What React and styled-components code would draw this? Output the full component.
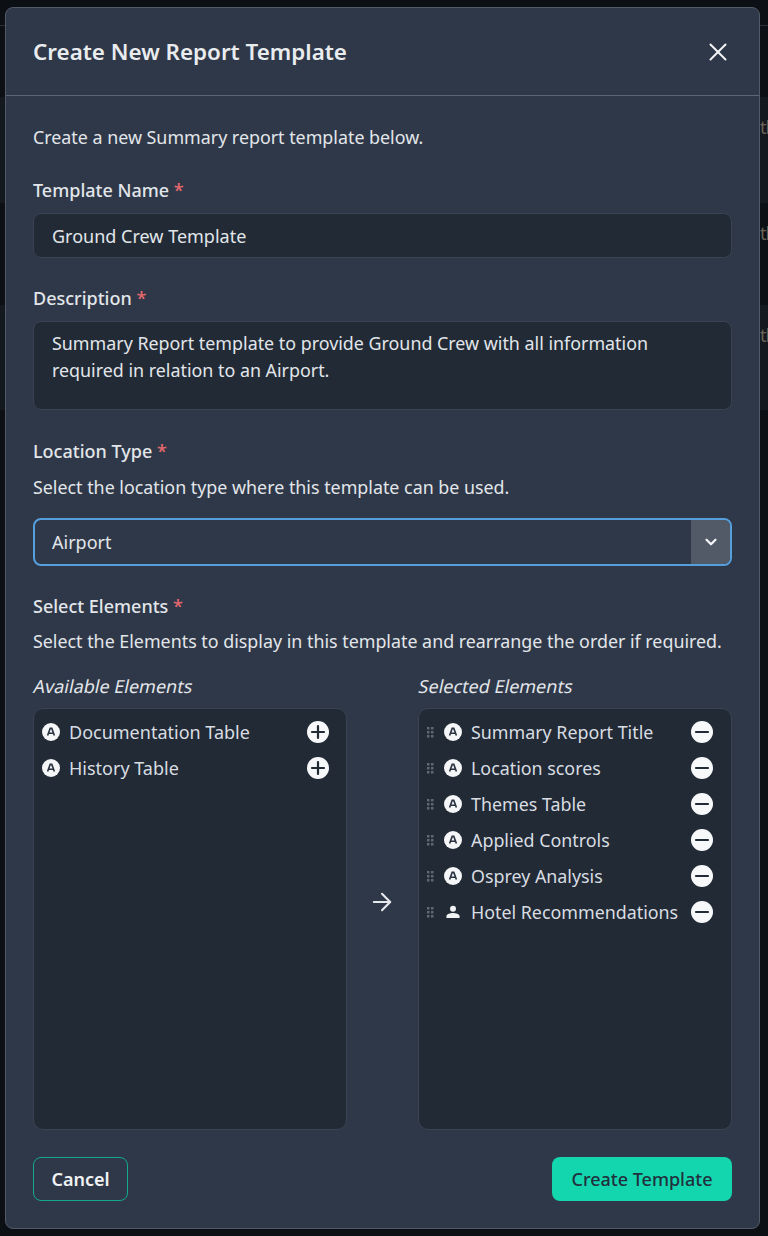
import React from "react";
import styled, { createGlobalStyle } from "styled-components";
import { ArrowRight, ChevronDown, X } from "lucide-react";

const GlobalStyle = createGlobalStyle`
  html, body {
    margin: 0;
    padding: 0;
    background: #0c1015;
  }
  * {
    box-sizing: border-box;
  }
`;

const Page = styled.div`
  position: relative;
  width: 768px;
  height: 1236px;
  overflow: hidden;
  padding: 7px 8px 0 5px;
  font-family: "Noto Sans", sans-serif;
  font-size: 18px;
  color: #e2e6ea;
`;

const BackdropRule = styled.div`
  position: absolute;
  top: 25px;
  left: 0;
  right: 0;
  height: 1px;
  background: #2b3038;
`;

const BackdropRow = styled.div`
  position: absolute;
  left: 0;
  right: 0;
  top: ${(p) => p.$top}px;
  height: ${(p) => p.$height}px;
  padding-left: 760px;
  background: ${(p) => (p.$shade ? "#141920" : "transparent")};
  color: #6b6455;
  font-size: 18px;
  letter-spacing: -1px;
  line-height: 60px;
  white-space: nowrap;
  overflow: hidden;
`;

const Modal = styled.div`
  position: relative;
  width: 755px;
  height: 1222px;
  background: #2f3848;
  border: 1px solid #525a68;
  border-radius: 8px;
`;

const Header = styled.div`
  display: flex;
  align-items: center;
  justify-content: space-between;
  height: 88px;
  padding: 0 27px;
  border-bottom: 1px solid #5d6573;
`;

const Title = styled.h2`
  margin: -1px 0 0;
  font-size: 22.4px;
  font-weight: 600;
  color: #e9ecef;
`;

const Close = styled.button`
  display: flex;
  margin-right: -1px;
  padding: 0;
  border: 0;
  background: none;
  color: #f2f4f6;
`;

const Body = styled.div`
  padding: 28px 27px 0;
`;

const Text = styled.p`
  margin: ${(p) => p.$top || 0}px 0 0;
  font-size: 17.85px;
  line-height: 27px;
  height: 27px;
`;

const Label = styled.div`
  margin-top: ${(p) => p.$top}px;
  font-weight: 500;
  line-height: 27px;
  height: 27px;
`;

const Star = styled.span`
  color: #e8696f;
`;

const Field = styled.div`
  margin-top: 9px;
  height: ${(p) => p.$height}px;
  padding: ${(p) => p.$pad}px 18px;
  background: #212a35;
  border: 1px solid #3a4352;
  border-radius: 8px;
  font-size: ${(p) => p.$size || 18}px;
  line-height: 27px;
`;

const Select = styled.div`
  display: flex;
  justify-content: space-between;
  margin-top: 17px;
  height: 48px;
  background: #2f3848;
  border: 2px solid #559fdc;
  border-radius: 8px;
  overflow: hidden;
`;

const SelectValue = styled.div`
  padding-left: 17px;
  line-height: 44px;
`;

const SelectButton = styled.div`
  display: flex;
  align-items: center;
  justify-content: center;
  width: 39px;
  background: #535a67;
  color: #f2f4f6;
`;

const Columns = styled.div`
  display: grid;
  grid-template-columns: 314px 71px 314px;
  margin-top: 18px;
`;

const Column = styled.div`
  min-width: 0;
`;

const ColumnTitle = styled.div`
  height: 27px;
  line-height: 27px;
  margin-bottom: 8px;
`;

const SlantedText = styled.span`
  display: inline-block;
  margin-left: 1px;
  transform: skewX(-12deg);
`;

const ListBox = styled.div`
  height: 422px;
  padding: 5px 0 0 8px;
  background: #212a35;
  border: 1px solid #3a4352;
  border-radius: 10px;
`;

const Row = styled.div`
  display: flex;
  align-items: center;
  height: 36px;
`;

const RowLabel = styled.span`
  flex: 1;
  margin-left: 9px;
  font-size: ${(p) => p.$size || 18}px;
  color: #d9dde2;
  white-space: nowrap;
`;

const ArrowCell = styled.div`
  display: flex;
  align-items: center;
  justify-content: center;
  padding: 1px 2px 0 0;
  color: #e6e9ec;
`;

const Footer = styled.div`
  display: flex;
  justify-content: space-between;
  margin-top: 27px;
`;

const CancelButton = styled.button`
  width: 95px;
  height: 44px;
  padding: 0;
  background: transparent;
  border: 1px solid #14a88e;
  border-radius: 8px;
  color: #f0f2f4;
  font: 600 18px "Noto Sans", sans-serif;
`;

const CreateButton = styled.button`
  width: 180px;
  height: 44px;
  padding: 0;
  background: #14d6ae;
  border: 0;
  border-radius: 8px;
  color: #21303d;
  font: 500 18px "Noto Sans", sans-serif;
`;

const BadgeSvg = styled.svg`
  flex: none;
  display: block;
`;

const AutoBadge = () => (
  <BadgeSvg width="18" height="18" viewBox="0 0 18 18">
    <circle cx="9" cy="9" r="9" fill="#f5f6f7" />
    <path d="M5.6 12.6 8.2 5.4h1.600l2.600 7.200M6.600 10.300h4.800" fill="none" stroke="#2a3340" strokeWidth="1.600" />
  </BadgeSvg>
);

const PersonBadge = () => (
  <BadgeSvg width="18" height="18" viewBox="0 0 18 18">
    <circle cx="9" cy="5.8" r="3" fill="#f0f2f4" />
    <path d="M2.400 15v-1.600c0-2.200 4-3.300 6.600-3.300s6.600 1.100 6.600 3.300V15z" fill="#f0f2f4" />
  </BadgeSvg>
);

const CircleAction = styled.svg`
  flex: none;
  display: block;
  margin-right: ${(p) => p.$right}px;
`;

const PlusIcon = () => (
  <CircleAction $right={17} width="22" height="22" viewBox="0 0 22 22">
    <circle cx="11" cy="11" r="11" fill="#f7f8f9" />
    <path d="M11 5v12M5 11h12" stroke="#212a35" strokeWidth="2.200" strokeLinecap="round" />
  </CircleAction>
);

const MinusIcon = () => (
  <CircleAction $right={18} width="22" height="22" viewBox="0 0 22 22">
    <circle cx="11" cy="11" r="11" fill="#f7f8f9" />
    <path d="M5 11h12" stroke="#212a35" strokeWidth="2.200" strokeLinecap="round" />
  </CircleAction>
);

const GripSvg = styled.svg`
  flex: none;
  display: block;
  margin-right: 8px;
`;

const Grip = () => (
  <GripSvg width="9" height="11" viewBox="0 0 9 11" fill="#5f6875">
    {[0, 4, 8].map((y) => (
      <React.Fragment key={y}>
        <rect x="0" y={y} width="2.500" height="2.500" />
        <rect x="4" y={y} width="2.500" height="2.500" />
      </React.Fragment>
    ))}
  </GripSvg>
);

const available = ["Documentation Table", "History Table"];
const selected = [
  "Summary Report Title",
  "Location scores",
  "Themes Table",
  "Applied Controls",
  "Osprey Analysis",
];

const App = () => {
  return (
    <Page>
      <GlobalStyle />
      <BackdropRule />
      <BackdropRow $top={97} $height={106} $shade>tl</BackdropRow>
      <BackdropRow $top={203} $height={102}>tl</BackdropRow>
      <BackdropRow $top={305} $height={105} $shade>tl</BackdropRow>
      <Modal>
        <Header>
          <Title>Create New Report Template</Title>
          <Close>
            <X size={30} strokeWidth={1.6} />
          </Close>
        </Header>
        <Body>
          <Text>Create a new Summary report template below.</Text>
          <Label $top={26}>
            Template Name <Star>*</Star>
          </Label>
          <Field $height={45} $pad={9}>Ground Crew Template</Field>
          <Label $top={27}>
            Description <Star>*</Star>
          </Label>
          <Field $height={89} $pad={8} $size={17.88}>
            Summary Report template to provide Ground Crew with all information
            required in relation to an Airport.
          </Field>
          <Label $top={28}>
            Location Type <Star>*</Star>
          </Label>
          <Text $top={9}>
            Select the location type where this template can be used.
          </Text>
          <Select>
            <SelectValue>Airport</SelectValue>
            <SelectButton>
              <ChevronDown size={18} strokeWidth={3} />
            </SelectButton>
          </Select>
          <Label $top={27}>
            Select Elements <Star>*</Star>
          </Label>
          <Text $top={8}>
            Select the Elements to display in this template and rearrange the
            order if required.
          </Text>
          <Columns>
            <Column>
              <ColumnTitle>
                <SlantedText>Available Elements</SlantedText>
              </ColumnTitle>
              <ListBox>
                {available.map((name) => (
                  <Row key={name}>
                    <AutoBadge />
                    <RowLabel>{name}</RowLabel>
                    <PlusIcon />
                  </Row>
                ))}
              </ListBox>
            </Column>
            <ArrowCell>
              <ArrowRight size={28} strokeWidth={1.8} />
            </ArrowCell>
            <Column>
              <ColumnTitle>
                <SlantedText>Selected Elements</SlantedText>
              </ColumnTitle>
              <ListBox>
                {selected.map((name) => (
                  <Row key={name}>
                    <Grip />
                    <AutoBadge />
                    <RowLabel $size={17.85}>{name}</RowLabel>
                    <MinusIcon />
                  </Row>
                ))}
                <Row>
                  <Grip />
                  <PersonBadge />
                  <RowLabel $size={17.85}>Hotel Recommendations</RowLabel>
                  <MinusIcon />
                </Row>
              </ListBox>
            </Column>
          </Columns>
          <Footer>
            <CancelButton>Cancel</CancelButton>
            <CreateButton>Create Template</CreateButton>
          </Footer>
        </Body>
      </Modal>
    </Page>
  );
};

export default App;
